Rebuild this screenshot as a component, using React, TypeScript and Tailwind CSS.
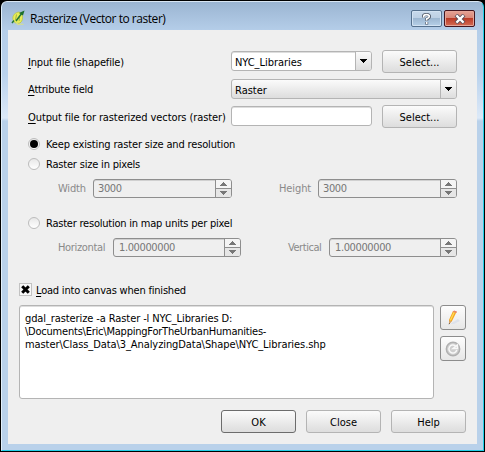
import type { ReactNode } from "react";

const face = "font-['DejaVu_Sans_Condensed','DejaVu_Sans',sans-serif] [font-stretch:condensed]";

function Caret({ up = false, dim = false }: { up?: boolean; dim?: boolean }) {
  return (
    <svg width="7" height="4" viewBox="0 0 7 4" shapeRendering="crispEdges" className={up ? "rotate-180" : ""}>
      <path d="M0 0h7L4 4H3z" fill={dim ? "#777777" : "#000000"} />
    </svg>
  );
}

function Button({ children, strong = false }: { children: ReactNode; strong?: boolean }) {
  return (
    <button
      className={`flex h-[23px] w-[75px] shrink-0 items-center justify-center rounded-[3px] border bg-linear-to-b from-[#fbfbfb] to-[#dddddd] pt-[2px] ${
        strong ? "border-[#6c6c6c]" : "border-[#b4b4b4]"
      }`}
    >
      {children}
    </button>
  );
}

function Combo({ value, size, plain = false }: { value: ReactNode; size: string; plain?: boolean }) {
  return (
    <div
      className={`flex h-5 shrink-0 overflow-hidden rounded-[3px] border border-[#b4b4b4] ${size} ${
        plain ? "bg-linear-to-b from-[#fbfbfb] to-[#dddddd]" : "bg-white shadow-[inset_0_1px_0_#dddddd]"
      }`}
    >
      <div className="flex flex-1 items-center pt-[2px] pl-[3px]">{value}</div>
      <div className="flex w-4 items-center justify-center border-l border-[#b4b4b4] bg-linear-to-b from-[#fbfbfb] to-[#dddddd]">
        <Caret />
      </div>
    </div>
  );
}

function Spin({ value, size }: { value: ReactNode; size: string }) {
  return (
    <div className={`flex h-[19px] shrink-0 overflow-hidden rounded-[3px] border border-[#8e8e8e] shadow-[inset_0_1px_0_#d0d0d0] ${size}`}>
      <div className="flex flex-1 items-center pl-[4px] tracking-[-0.38px] text-[#777777]">{value}</div>
      <div className="flex w-4 flex-col border-l border-[#8e8e8e] bg-[#f4f4f4]">
        <div className="flex h-2 items-center justify-center">
          <Caret up dim />
        </div>
        <div className="flex h-[9px] items-center justify-center border-t border-[#8e8e8e] bg-[#e6e6e6]">
          <Caret dim />
        </div>
      </div>
    </div>
  );
}

function Radio({ on = false, children }: { on?: boolean; children: ReactNode }) {
  return (
    <div className="flex h-5 items-center gap-[6px] pl-5">
      <span className="flex size-3 items-center justify-center rounded-full border border-[#bcbcbc] bg-linear-to-b from-[#e8e8e8] to-white">
        {on && <span className="size-2 rounded-full bg-black" />}
      </span>
      {children}
    </div>
  );
}

function Key({ children }: { children: ReactNode }) {
  return <span className="underline underline-offset-2">{children}</span>;
}

export default function App() {
  return (
    <div className="h-[452px] w-[485px] overflow-hidden bg-black p-px">
      <div className={`flex h-[450px] w-[483px] flex-col rounded-t-[6px] border border-t-[#d9e6f3] border-r-[#22cfe8] border-b-[#22cfe8] border-l-[#e2f0fb] bg-[linear-gradient(to_bottom,#9bb5d2_0,#b5cee9_29px,#bad2ec_72px,#dce9f8_116px,#b9d1ea_119px,#b9d1ea_100%)] px-[6px] pb-[6px] text-[11px] leading-[13px] whitespace-nowrap text-black ${face}`}>
        <header className="flex h-7 shrink-0 items-start">
          <svg width="14" height="16" viewBox="0 0 14 16" className="mt-2 ml-[3px] shrink-0">
            <path d="M8.5 2C4 2.200 1.200 5.500 2 9.500c.7 3.500 4 4.500 7 3.500 2.500-1.500 3-5 2.200-8z" fill="#e7ed57" stroke="#b5c23d" strokeWidth=".7" />
            <path d="M5.500 4.500 4.500 10M8.500 6l-.3 5" stroke="#a3b04b" fill="none" />
            <path d="m1 13 2-2.500M5 11l6-8" stroke="#247735" strokeWidth="1.500" />
            <path d="m8 3 5.500-2.500L12 5.500z" fill="#1d6f2b" />
            <path d="m5 12.500 2 2 4-.5 1.500.5" stroke="#d8df8a" strokeWidth="1.200" fill="none" />
          </svg>
          <h1 className="mt-[9px] ml-[5px] font-['Open_Sans','Noto_Sans',sans-serif] text-[12px] leading-4 tracking-[-0.46px] [font-stretch:normal]">Rasterize (Vector to raster)</h1>
          <div className="mt-2 mr-[2px] ml-auto flex gap-[2px]">
            <span className="flex h-[17px] w-[31px] items-center justify-center rounded-[2px] border border-[#55708d] bg-[linear-gradient(#c8d9eb_0,#bdd0e4_45%,#9db7d1_50%,#b7d0e8)] shadow-[inset_0_0_0_1px_#d2e2f2]">
              <svg width="9" height="12" viewBox="0 0 9 12">
                <path d="M1.5 4.5V3.3q0-1.8 3-1.8t3 2.1Q7.5 5 4.7 6v1.8M4.7 9v2.6" fill="none" stroke="#4c5564" strokeWidth="3" />
                <path d="M1.700 4.500V3.300q0-1.600 2.800-1.600t2.800 1.900Q7.300 4.800 4.700 5.800v1.700M4.700 9v2" fill="none" stroke="#fff" strokeWidth="1.700" />
              </svg>
            </span>
            <span className="flex h-[17px] w-[31px] items-center justify-center rounded-[2px] border border-[#43151f] bg-[linear-gradient(#e6a295_0,#d78778_45%,#bb3b27_50%,#d46d56)] shadow-[inset_0_0_0_1px_#e5a598]">
              <svg width="12" height="10" viewBox="0 0 12 10">
                <path d="m2 1 8 8M10 1 2 9" stroke="#554b57" strokeWidth="4" />
                <path d="m2.4 1.4 7.2 7.2M9.6 1.4 2.4 8.6" stroke="#fff" strokeWidth="2.2" />
              </svg>
            </span>
          </div>
        </header>

        <main className="flex h-[414px] w-[469px] flex-col bg-[#efefef] pt-5">
          <div className="flex h-7 items-start pl-5">
            <span className="w-[203px] pt-[6px] tracking-[-0.17px]"><Key>I</Key>nput file (shapefile)</span>
            <div className="flex gap-[10px]">
              <div className="pt-px"><Combo size="w-[141px]" value={<span className="tracking-[-0.05px]">NYC_Libraries</span>} /></div>
              <Button>Select...</Button>
            </div>
          </div>
          <div className="flex h-[26px] items-start pt-px pl-5">
            <span className="w-[203px] pt-1 tracking-[-0.2px]"><Key>A</Key>ttribute field</span>
            <Combo size="w-[226px]" plain value={<span>Raster</span>} />
          </div>
          <div className="flex h-[30px] items-start pl-5">
            <span className="w-[203px] pt-[7px] tracking-[-0.1px]"><Key>O</Key>utput file for rasterized vectors (raster)</span>
            <div className="flex gap-[10px]">
              <div className="mt-[2px] h-5 w-[141px] rounded-[3px] border border-[#b4b4b4] bg-white shadow-[inset_0_1px_0_#dddddd]" />
              <div className="pt-px"><Button>Select...</Button></div>
            </div>
          </div>

          <Radio on><span className="tracking-[-0.15px]">Keep existing raster size and resolution</span></Radio>
          <Radio><span className="tracking-[-0.19px]">Raster size in pixels</span></Radio>
          <div className="mt-[5px] flex h-[19px] shrink-0 items-center pl-[50px] text-[#8a8a8a]">
            <span className="w-[35px] tracking-[-0.2px]">Width</span>
            <Spin size="w-[139px]" value={<span>3000</span>} />
            <span className="ml-[47px] w-[39px] tracking-[-0.1px]">Height</span>
            <Spin size="w-[139px]" value={<span>3000</span>} />
          </div>
          <div className="mt-[15px]">
            <Radio><span className="tracking-[-0.22px]">Raster resolution in map units per pixel</span></Radio>
          </div>
          <div className="mt-[5px] flex h-[19px] shrink-0 items-center pl-[50px] text-[#8a8a8a]">
            <span className="w-[55px] tracking-[-0.35px]">Horizontal</span>
            <Spin size="w-[128px]" value={<span className="pl-px">1.00000000</span>} />
            <span className="ml-[47px] w-[41px] tracking-[-0.45px]">Vertical</span>
            <Spin size="w-[128px]" value={<span className="pl-px">1.00000000</span>} />
          </div>

          <div className="mt-[26px] flex h-[13px] shrink-0 items-center gap-[4px] pl-[11px]">
            <span className="flex size-[13px] items-center justify-center border border-[#c2c2c2] bg-[#f8f8f8]">
              <svg width="9" height="9" viewBox="0 0 9 9"><path d="m1.2 1.2 6.6 6.6M7.8 1.2 1.2 7.8" stroke="#000" strokeWidth="3" /></svg>
            </span>
            <span className="pt-px tracking-[-0.2px]"><Key>L</Key>oad into canvas when finished</span>
          </div>
          <div className="mt-[9px] flex h-[94px] shrink-0 gap-[6px] pl-[11px]">
            <div className="h-[94px] w-[415px] rounded-[3px] border border-[#b4b4b4] bg-white pt-[6px] pl-[5px] shadow-[inset_0_1px_0_#dddddd]">
              <p className="tracking-[-0.1px]">gdal_rasterize -a Raster -l NYC_Libraries D:</p>
              <p className="tracking-[-0.22px]">\Documents\Eric\MappingForTheUrbanHumanities-</p>
              <p className="tracking-[-0.08px]">master\Class_Data\3_AnalyzingData\Shape\NYC_Libraries.shp</p>
            </div>
            <div className="flex flex-col gap-[6px]">
              <button className="flex h-[25px] w-[26px] items-center justify-center rounded-[3px] border border-[#8c8c8c] bg-linear-to-b from-[#fdfdfd] to-[#e7e7e7]">
                <svg width="16" height="16" viewBox="0 0 16 16">
                  <path d="m5 14 8-5 2 2-6 3z" fill="#dde2ec" />
                  <path d="m4 10 4-9 3.5 1-4.5 9-3 3z" fill="#f6a51c" />
                  <path d="m5.3 10.5 4-8.5" stroke="#ffdc58" strokeWidth="1.3" />
                  <path d="m8 2 1-1.5 3 1-.6 1.4z" fill="#e98769" />
                  <path d="m4 10.6 2.8.7L4 14z" fill="#d4a36c" />
                  <path d="m4 13-.3 1.4L5 13.4z" fill="#493b36" />
                </svg>
              </button>
              <button className="flex h-[25px] w-[26px] items-center justify-center rounded-[3px] border border-[#8c8c8c] bg-linear-to-b from-[#fdfdfd] to-[#e7e7e7]">
                <svg width="16" height="16" viewBox="0 0 16 16" fill="none">
                  <circle cx="8" cy="8" r="6.7" fill="#cecece" stroke="#b0b0b0" strokeWidth="1.4" />
                  <path d="M10.3 4.8A4 4 0 1 0 11.8 9M8 7.6h4.4V4z" fill="none" stroke="#f8f8f8" strokeWidth="1.5" />
                </svg>
              </button>
            </div>
          </div>
          <div className="mt-[11px] flex gap-[10px] pl-[213px]">
            <Button strong>OK</Button>
            <Button>Close</Button>
            <Button>Help</Button>
          </div>
        </main>
      </div>
    </div>
  );
}
